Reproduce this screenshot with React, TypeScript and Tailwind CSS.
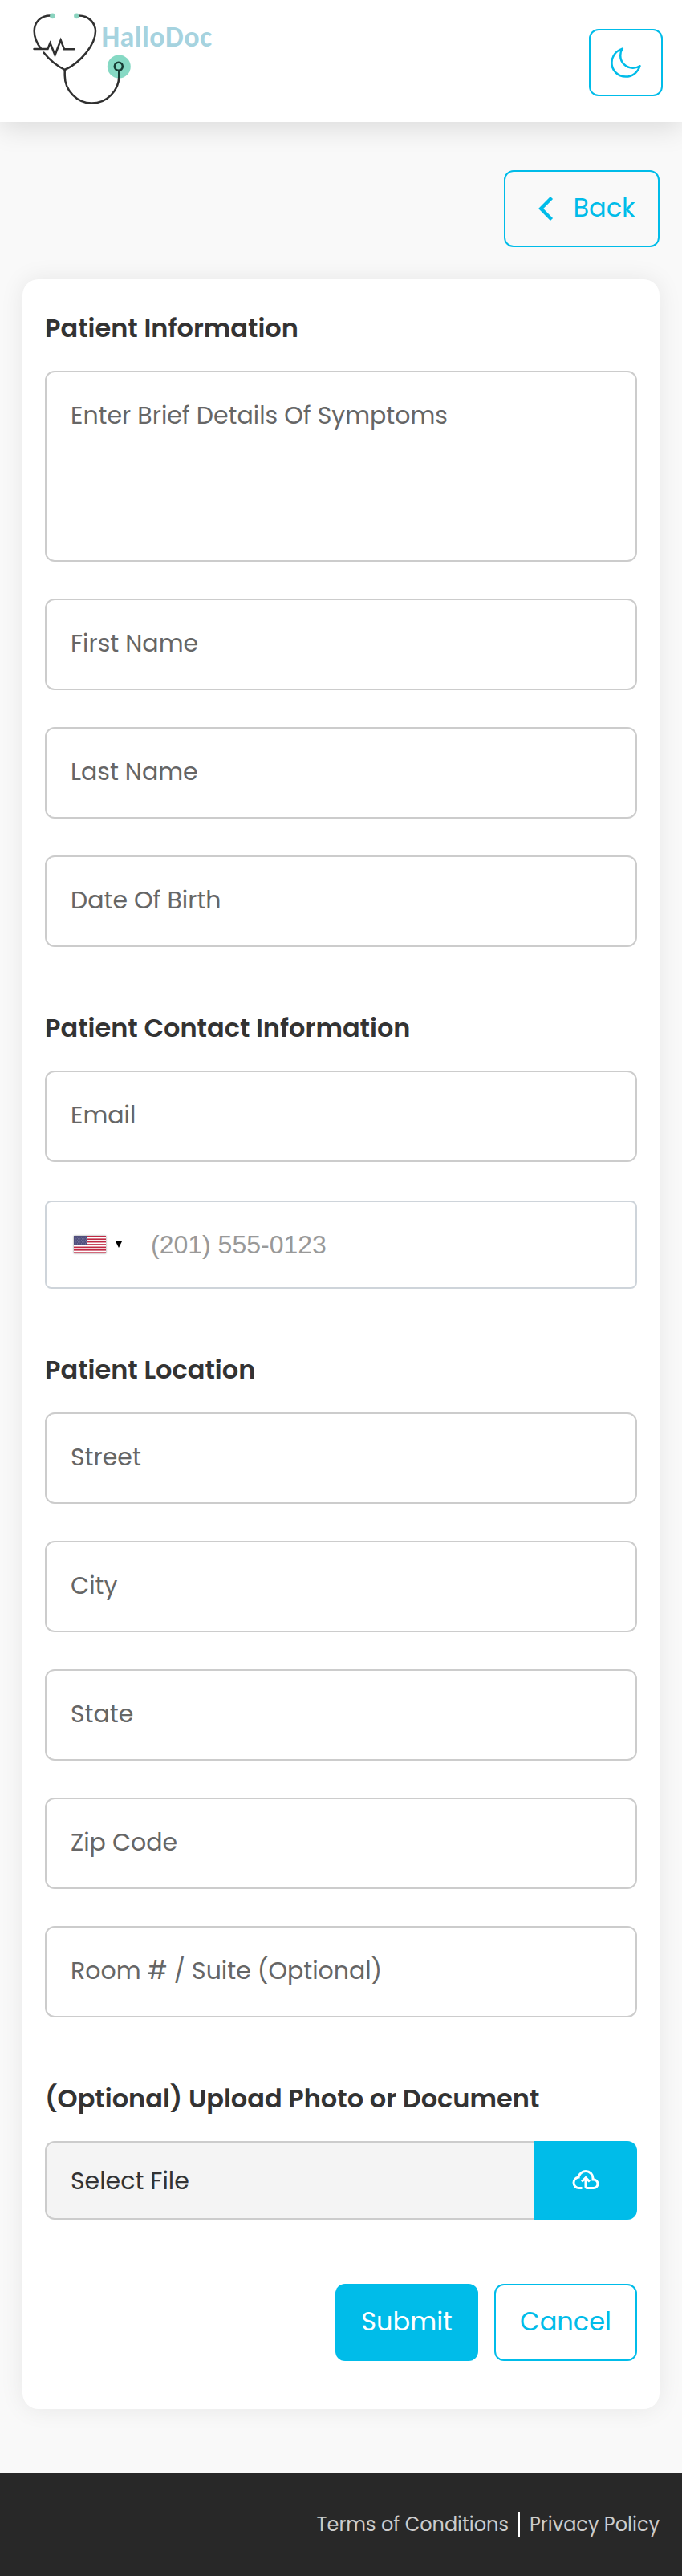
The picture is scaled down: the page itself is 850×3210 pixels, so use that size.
const outlineButton =
  'flex items-center justify-center rounded-[12px] border-2 border-[#00bce9] text-[#00bce9]';

function Logo() {
  return (
    <svg width="280" height="136" viewBox="0 0 280 136" fill="none" aria-label="HalloDoc">
      <circle cx="148.3" cy="83" r="14.5" fill="#86d9c4" />
      <g stroke="#303030" strokeWidth="2.5" strokeLinecap="round" strokeLinejoin="round">
        <path d="M63 19.5C50 19.5 42.7 28 42.7 39C42.7 47 46 54 51 60.5" />
        <path d="M98 19.5C111 19.5 119 29 119 39C119 55 101 78 80.7 87C71 82 62 75 54.5 65.5" />
        <path d="M80.7 87V94C80.7 113 96 128.6 114.3 128.6C133 128.6 148.3 113 148.3 95V88" />
        <path d="M42.5 61H59.5L62.5 53.5L68.5 68.5L75.7 50L80 61.2H92.5" strokeLinejoin="miter" />
      </g>
      <circle cx="147.8" cy="82.7" r="5" stroke="#173c34" strokeWidth="2.6" />
      <path d="M148.3 88V97" stroke="#173c34" strokeWidth="2.5" />
      <circle cx="65.5" cy="19.8" r="3.4" fill="#8ad3bf" />
      <circle cx="95.5" cy="19.8" r="3.4" fill="#8ad3bf" />
      <text
        x="126.5"
        y="57.5"
        fill="#a6d3df"
        textLength="137.5"
        className="font-['Carlito','Lato',sans-serif] text-[36px] font-bold"
      >
        HalloDoc
      </text>
    </svg>
  );
}

function Moon() {
  return (
    <svg width="38" height="38" viewBox="0 0 38 38" fill="none">
      <path
        d="M14.8 1.6C7 4 1.4 11 1.4 19.2C1.4 28.8 9.2 36.6 18.8 36.6C27 36.6 34 31.2 36.5 23.2C34 24.8 31 25.7 27.8 25.7C19 25.7 12.2 18.8 12.2 10.2C12.2 7 13 4 14.8 1.6Z"
        stroke="currentColor"
        strokeWidth="2.5"
        strokeLinejoin="round"
      />
    </svg>
  );
}

function Flag() {
  return (
    <svg width="40" height="22" viewBox="0 0 40 22" className="shadow-[0_0_2px_#888]">
      <rect width="40" height="22" fill="#fff" />
      {[0, 2, 4, 6, 8, 10, 12].map((i) => (
        <rect key={i} y={i * 1.692} width="40" height="1.692" fill="#bf2a44" />
      ))}
      <rect width="16" height="11.85" fill="#504f7d" />
      {[1.5, 3.5, 5.5, 7.5, 9.5].map((y, r) =>
        [1.5, 4, 6.5, 9, 11.5, 14].map((x) => (
          <rect key={`${x}-${y}`} x={x + (r % 2)} y={y} width="0.8" height="0.8" fill="#9d9cba" />
        )),
      )}
    </svg>
  );
}

function Heading({ children }: { children: string }) {
  return <h2 className="mb-[29px] text-[32px] leading-[48px] font-semibold text-[#333]">{children}</h2>;
}

function Field({ label }: { label: string }) {
  return (
    <div className="flex h-[114px] items-center rounded-[12px] border-2 border-[#ccc] pb-1 pl-[30px] text-[30px] text-[#666]">
      {label}
    </div>
  );
}

export default function App() {
  return (
    <div className="flex h-[3210px] w-[850px] flex-col bg-[#f9f9f9] font-['Poppins','Inter',sans-serif]">
      <header className="flex h-[152px] shrink-0 items-start justify-between bg-white pr-6 shadow-[0_8px_32px_rgba(0,0,0,0.12)]">
        <Logo />
        <button className={`${outlineButton} mt-9 h-[84px] w-[92px]`} aria-label="Dark mode">
          <Moon />
        </button>
      </header>

      <main className="flex flex-1 flex-col px-7 pt-[60px]">
        <button className={`${outlineButton} h-24 w-[194px] gap-6 self-end pl-3 text-[32px]`}>
          <svg width="20" height="34" viewBox="0 0 20 34" fill="none">
            <path d="M17.5 3.5L4.2 17L17.5 30.5" stroke="currentColor" strokeWidth="4.4" />
          </svg>
          <span className="pb-0.5">Back</span>
        </button>

        <section className="mt-10 flex flex-col rounded-[20px] bg-white px-7 pt-[37px] pb-[60px] shadow-[0_0_30px_rgba(0,0,0,0.08)]">
          <Heading>Patient Information</Heading>
          <div className="flex flex-col gap-[46px]">
            <div className="h-[238px] rounded-[12px] border-2 border-[#ccc] pt-[31px] pl-[30px] text-[30px] leading-[45px] text-[#666]">
              Enter Brief Details Of Symptoms
            </div>
            <Field label="First Name" />
            <Field label="Last Name" />
            <Field label="Date Of Birth" />
          </div>

          <div className="mt-[77px] flex flex-col">
            <Heading>Patient Contact Information</Heading>
            <Field label="Email" />
            <div className="mt-12 flex h-[110px] items-center rounded-[8px] border-2 border-[#ced4da] pl-[34px]">
              <Flag />
              <svg width="8" height="8" viewBox="0 0 8 8" className="ml-3">
                <path d="M0 0H8L4 8Z" fill="#000" />
              </svg>
              <span className="ml-9 font-['Liberation_Sans',Arial,sans-serif] text-[32px] text-[#999]">
                (201) 555-0123
              </span>
            </div>
          </div>

          <div className="mt-[77px] flex flex-col">
            <Heading>Patient Location</Heading>
            <div className="flex flex-col gap-[46px]">
              <Field label="Street" />
              <Field label="City" />
              <Field label="State" />
              <Field label="Zip Code" />
              <Field label="Room # / Suite (Optional)" />
            </div>
          </div>

          <div className="mt-[77px] flex flex-col">
            <Heading>(Optional) Upload Photo or Document</Heading>
            <div className="flex h-[98px]">
              <div className="flex flex-1 items-center rounded-l-[12px] border-2 border-r-0 border-[#ccc] bg-[#f4f4f4] pl-[30px] text-[30px] text-[#333]">
                Select File
              </div>
              <button className="flex w-32 items-center justify-center rounded-r-[12px] bg-[#00bce9] pb-0.5 text-white" aria-label="Upload">
                <svg width="36" height="36" viewBox="0 0 24 24" fill="currentColor">
                  <path d="M6.5 20q-2.28 0-3.89-1.57Q1 16.85 1 14.58q0-1.95 1.17-3.48q1.18-1.53 3.08-1.95q.63-2.3 2.5-3.72Q9.63 4 12 4q2.93 0 4.96 2.04Q19 8.07 19 11q1.73.2 2.86 1.5q1.14 1.28 1.14 3q0 1.88-1.31 3.19T18.5 20H13q-.82 0-1.41-.59Q11 18.83 11 18v-5.15L9.4 14.4L8 13l4-4l4 4l-1.4 1.4l-1.6-1.55V18h5.5q1.05 0 1.77-.73q.73-.72.73-1.77t-.73-1.77Q19.55 13 18.5 13H17v-2q0-2.07-1.46-3.54Q14.08 6 12 6Q9.93 6 8.46 7.46Q7 8.93 7 11h-.5q-1.45 0-2.47 1.03Q3 13.05 3 14.5T4.03 17q1.02 1 2.47 1H9v2" />
                </svg>
              </button>
            </div>
          </div>

          <div className="mt-20 flex justify-end gap-5 text-[32px]">
            <button className="flex h-24 w-[178px] items-center justify-center rounded-[12px] bg-[#00bce9] pb-0.5 text-white">
              Submit
            </button>
            <button className={`${outlineButton} h-24 w-[178px] pb-0.5`}>Cancel</button>
          </div>
        </section>
      </main>

      <footer className="flex h-32 shrink-0 items-center justify-end bg-[#282828] px-7 text-[24px] text-[#ccc]">
        <span>Terms of Conditions</span>
        <span className="mr-3 ml-3 h-8 w-0.5 bg-white" />
        <span>Privacy Policy</span>
      </footer>
    </div>
  );
}
